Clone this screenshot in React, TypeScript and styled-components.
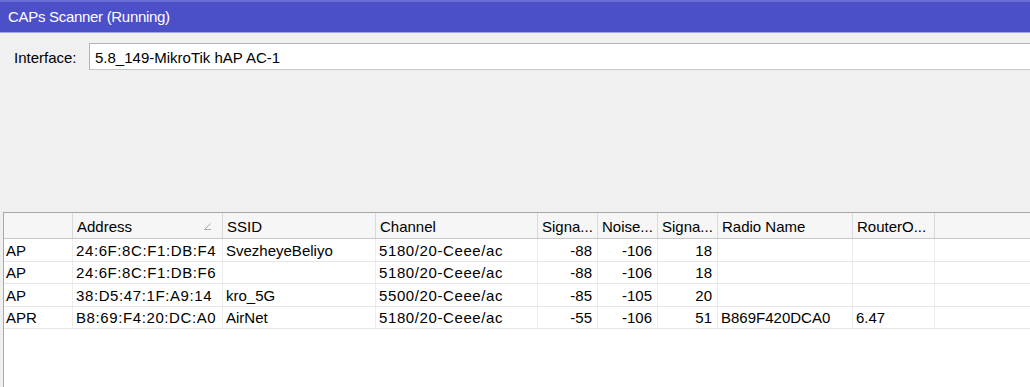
import React from "react";
import styled, { createGlobalStyle } from "styled-components";

const GlobalStyle = createGlobalStyle`
  html, body { margin: 0; padding: 0; background: #f0f0f0; }
  body { font-family: "Liberation Sans", Arial, sans-serif; font-size: 15px; color: #000; }
  * { box-sizing: border-box; }
`;

const COLS = "69px 150px 153px 162px 60px 60px 60px 135px 82px 1fr";

const Window = styled.div`
  width: 1030px;
  height: 387px;
  display: flex;
  flex-direction: column;
  background: #f0f0f0;
  overflow: hidden;
`;

const TitleBar = styled.div`
  height: 33px;
  flex: none;
  display: flex;
  align-items: center;
  padding: 0 0 1px 8px;
  background: #4b50c9;
  border-top: 2px solid #6a6ed2;
  border-bottom: 1px solid #9fa2e6;
  color: #fff;
  font-size: 15px;
  letter-spacing: -0.3px;
`;

const FormRow = styled.div`
  margin-top: 10px;
  display: flex;
  align-items: center;
  height: 27px;
  flex: none;
`;

const Label = styled.label`
  width: 89px;
  padding: 1px 0 0 14px;
  font-size: 15px;
  flex: none;
`;

const Field = styled.div`
  flex: 1;
  height: 27px;
  display: flex;
  align-items: center;
  padding: 1px 0 0 5px;
  background: #fff;
  border-top: 1px solid #b4b4b4;
  border-bottom: 1px solid #c8c8c8;
  border-left: 1px solid #b4b4b4;
  font-size: 15px;
`;

const TableFrame = styled.div`
  margin-top: 142px;
  margin-left: 3px;
  flex: 1;
  display: flex;
  flex-direction: column;
  background: #fff;
  border-top: 1px solid #a9a9a9;
  border-left: 1px solid #a9a9a9;
`;

const HeaderRow = styled.div`
  display: grid;
  grid-template-columns: ${COLS};
  height: 26px;
  background: #f6f6f6;
  border-bottom: 1px solid #c8c8c8;
`;

const HeaderCell = styled.div<{ $last?: boolean }>`
  position: relative;
  display: flex;
  align-items: center;
  padding: 1px 4px 0 4px;
  border-right: ${(p) => (p.$last ? "none" : "1px solid #dadada")};
  white-space: nowrap;
  overflow: hidden;
  font-size: 15px;
`;

const SortMark = styled.svg`
  position: absolute;
  right: 10px;
  top: 10px;
`;

const DataRow = styled.div`
  display: grid;
  grid-template-columns: ${COLS};
  height: 22.5px;
  border-bottom: 1px solid #e6e6e6;
`;

const Cell = styled.div<{ $right?: boolean; $wide?: boolean; $last?: boolean }>`
  display: flex;
  align-items: center;
  justify-content: ${(p) => (p.$right ? "flex-end" : "flex-start")};
  padding: ${(p) => (p.$right ? "1px 5px 0 0" : "1px 0 0 3px")};
  border-right: ${(p) => (p.$last ? "none" : "1px solid #ececec")};
  white-space: nowrap;
  overflow: hidden;
  font-size: 15px;
  letter-spacing: ${(p) => (p.$wide ? "0.6px" : "0")};
`;

const FirstCell = styled(Cell)`
  padding-left: 2px;
`;

type Col = { title: string; right?: boolean; wide?: boolean; sort?: boolean };

const columns: Col[] = [
  { title: "" },
  { title: "Address", wide: true, sort: true },
  { title: "SSID" },
  { title: "Channel", wide: true },
  { title: "Signa...", right: true },
  { title: "Noise...", right: true },
  { title: "Signa...", right: true },
  { title: "Radio Name" },
  { title: "RouterO..." },
  { title: "" },
];

const rows: string[][] = [
  ["AP", "24:6F:8C:F1:DB:F4", "SvezheyeBeliyo", "5180/20-Ceee/ac", "-88", "-106", "18", "", "", ""],
  ["AP", "24:6F:8C:F1:DB:F6", "", "5180/20-Ceee/ac", "-88", "-106", "18", "", "", ""],
  ["AP", "38:D5:47:1F:A9:14", "kro_5G", "5500/20-Ceee/ac", "-85", "-105", "20", "", "", ""],
  ["APR", "B8:69:F4:20:DC:A0", "AirNet", "5180/20-Ceee/ac", "-55", "-106", "51", "B869F420DCA0", "6.47", ""],
];

export default function App() {
  return (
    <>
      <GlobalStyle />
      <Window>
        <TitleBar>CAPs Scanner (Running)</TitleBar>
        <FormRow>
          <Label>Interface:</Label>
          <Field>5.8_149-MikroTik hAP AC-1</Field>
        </FormRow>
        <TableFrame>
          <HeaderRow>
            {columns.map((c, i) => (
              <HeaderCell key={i} $last={i === columns.length - 1}>
                {c.title}
                {c.sort && (
                  <SortMark width="8" height="7" viewBox="0 0 8 7">
                    <path d="M0.5 6.5 L6.5 0.5 M0.5 6.5 L7 6.5" fill="none" stroke="#a8a8a8" strokeWidth="1" />
                  </SortMark>
                )}
              </HeaderCell>
            ))}
          </HeaderRow>
          {rows.map((r, ri) => (
            <DataRow key={ri}>
              {r.map((v, ci) =>
                ci === 0 ? (
                  <FirstCell key={ci}>{v}</FirstCell>
                ) : (
                  <Cell
                    key={ci}
                    $right={columns[ci].right}
                    $wide={columns[ci].wide}
                    $last={ci === r.length - 1}
                  >
                    {v}
                  </Cell>
                )
              )}
            </DataRow>
          ))}
        </TableFrame>
      </Window>
    </>
  );
}
